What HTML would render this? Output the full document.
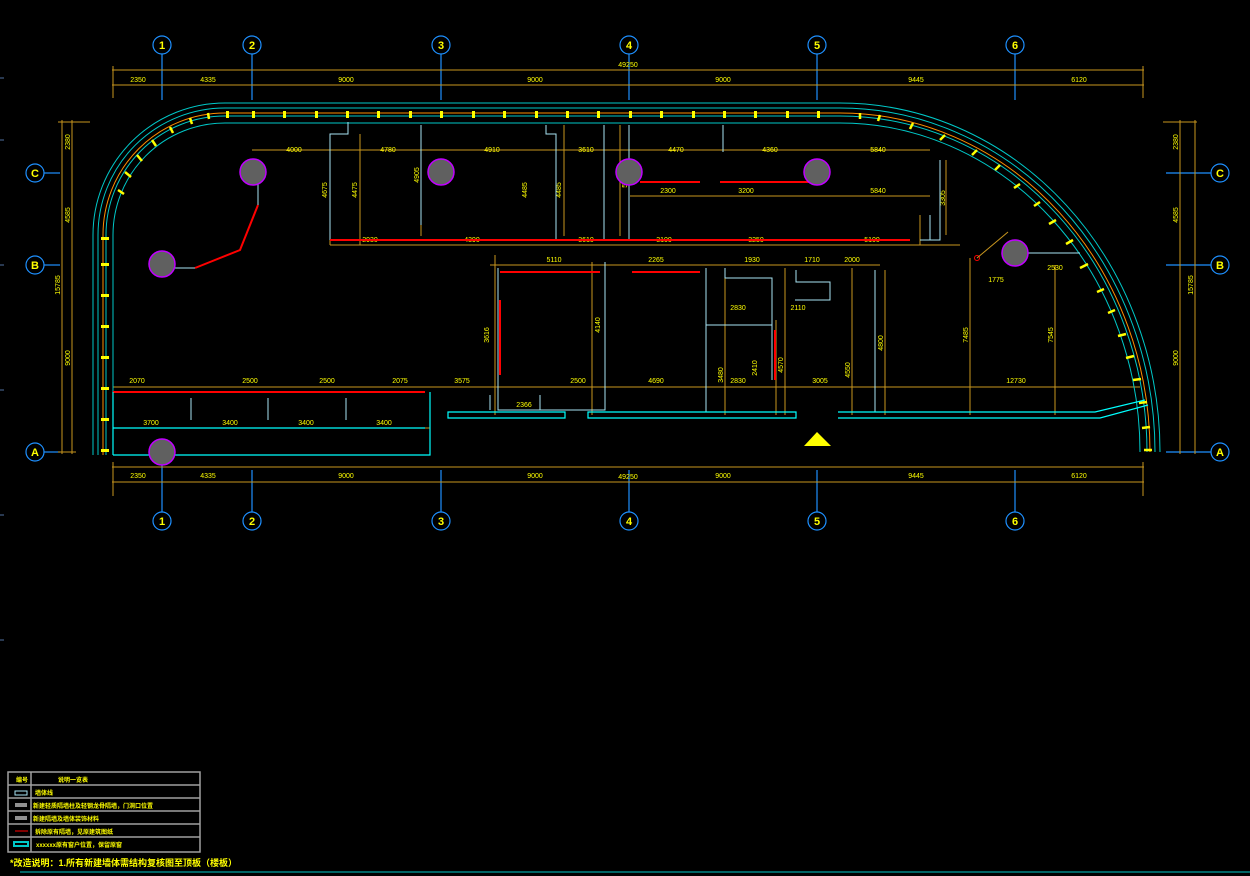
<!DOCTYPE html>
<html><head><meta charset="utf-8"><style>
html,body{margin:0;padding:0;background:#000;width:1250px;height:876px;overflow:hidden}
svg{display:block}
text{font-family:"Liberation Sans","Noto Sans CJK SC",sans-serif;fill:#ffff00}
.d{stroke:#c8961e;stroke-width:1;fill:none}
.w{stroke:#a8e4f4;stroke-width:1;fill:none}
.c{stroke:#00c8c8;stroke-width:1;fill:none}
.cy{stroke:#00ffff;stroke-width:1.2;fill:none}
.r{stroke:#ff0000;stroke-width:2;fill:none}
.ax{stroke:#1e90ff;stroke-width:1.2;fill:none}
.col{fill:#606060;stroke:#c000ff;stroke-width:1.5}
.t{font-size:7px}
.tb{font-size:11px;font-weight:bold}
</style></head><body>
<svg width="1250" height="876" viewBox="0 0 1250 876" xmlns="http://www.w3.org/2000/svg">
<!-- axis lines -->
<g class="ax">
<line x1="162" y1="54" x2="162" y2="100"/><line x1="252" y1="54" x2="252" y2="100"/>
<line x1="441" y1="54" x2="441" y2="100"/><line x1="629" y1="54" x2="629" y2="100"/>
<line x1="817" y1="54" x2="817" y2="100"/><line x1="1015" y1="54" x2="1015" y2="100"/>
<line x1="162" y1="462" x2="162" y2="512"/><line x1="252" y1="470" x2="252" y2="512"/>
<line x1="441" y1="470" x2="441" y2="512"/><line x1="629" y1="470" x2="629" y2="512"/>
<line x1="817" y1="470" x2="817" y2="512"/><line x1="1015" y1="470" x2="1015" y2="512"/>
<line x1="44" y1="173" x2="60" y2="173"/><line x1="44" y1="265" x2="60" y2="265"/><line x1="44" y1="452" x2="60" y2="452"/>
<line x1="1166" y1="173" x2="1211" y2="173"/><line x1="1166" y1="265" x2="1211" y2="265"/><line x1="1166" y1="452" x2="1211" y2="452"/>
</g>
<g class="ax" stroke-width="1.5">
<circle cx="162" cy="45" r="9"/><circle cx="252" cy="45" r="9"/><circle cx="441" cy="45" r="9"/><circle cx="629" cy="45" r="9"/><circle cx="817" cy="45" r="9"/><circle cx="1015" cy="45" r="9"/>
<circle cx="162" cy="521" r="9"/><circle cx="252" cy="521" r="9"/><circle cx="441" cy="521" r="9"/><circle cx="629" cy="521" r="9"/><circle cx="817" cy="521" r="9"/><circle cx="1015" cy="521" r="9"/>
<circle cx="35" cy="173" r="9"/><circle cx="35" cy="265" r="9"/><circle cx="35" cy="452" r="9"/>
<circle cx="1220" cy="173" r="9"/><circle cx="1220" cy="265" r="9"/><circle cx="1220" cy="452" r="9"/>
</g>
<g class="tb" text-anchor="middle">
<text x="162" y="49">1</text><text x="252" y="49">2</text><text x="441" y="49">3</text><text x="629" y="49">4</text><text x="817" y="49">5</text><text x="1015" y="49">6</text>
<text x="162" y="525">1</text><text x="252" y="525">2</text><text x="441" y="525">3</text><text x="629" y="525">4</text><text x="817" y="525">5</text><text x="1015" y="525">6</text>
<text x="35" y="177">C</text><text x="35" y="269">B</text><text x="35" y="456">A</text>
<text x="1220" y="177">C</text><text x="1220" y="269">B</text><text x="1220" y="456">A</text>
</g>
<!-- dimension lines -->
<g class="d">
<line x1="112" y1="70" x2="1144" y2="70"/><line x1="112" y1="85" x2="1144" y2="85"/>
<line x1="113" y1="66" x2="113" y2="98"/><line x1="1143" y1="66" x2="1143" y2="98"/>
<line x1="112" y1="467" x2="1144" y2="467"/><line x1="112" y1="482" x2="1144" y2="482"/>
<line x1="113" y1="462" x2="113" y2="496"/><line x1="1143" y1="462" x2="1143" y2="496"/>
<line x1="62" y1="120" x2="62" y2="454"/><line x1="72" y1="120" x2="72" y2="454"/>
<line x1="58" y1="122" x2="90" y2="122"/><line x1="58" y1="452" x2="76" y2="452"/>
<line x1="1180" y1="120" x2="1180" y2="454"/><line x1="1195" y1="120" x2="1195" y2="454"/>
<line x1="1163" y1="122" x2="1197" y2="122"/>
<!-- interior dims -->
<line x1="252" y1="150" x2="930" y2="150"/>
<line x1="330" y1="245" x2="960" y2="245"/>
<line x1="490" y1="265" x2="880" y2="265"/>
<line x1="113" y1="387" x2="440" y2="387"/>
<line x1="440" y1="387" x2="1140" y2="387"/>
<line x1="113" y1="428" x2="430" y2="428"/>
<line x1="630" y1="196" x2="930" y2="196"/>
<line x1="330" y1="134" x2="330" y2="245"/><line x1="360" y1="134" x2="360" y2="245"/>
<line x1="421" y1="125" x2="421" y2="236"/><line x1="564" y1="125" x2="564" y2="236"/>
<line x1="620" y1="125" x2="620" y2="236"/><line x1="725" y1="270" x2="725" y2="415"/>
<line x1="776" y1="320" x2="776" y2="415"/><line x1="785" y1="268" x2="785" y2="415"/>
<line x1="852" y1="268" x2="852" y2="415"/><line x1="970" y1="258" x2="970" y2="415"/>
<line x1="1055" y1="265" x2="1055" y2="415"/><line x1="592" y1="262" x2="592" y2="415"/>
<line x1="885" y1="270" x2="885" y2="415"/><line x1="495" y1="255" x2="495" y2="415"/>
<line x1="946" y1="160" x2="946" y2="235"/><line x1="920" y1="215" x2="920" y2="245"/>
</g>
<g class="t" text-anchor="middle">
<text x="628" y="67">49250</text><text x="628" y="479">49250</text>
<text x="138" y="82">2350</text><text x="208" y="82">4335</text><text x="346" y="82">9000</text><text x="535" y="82">9000</text><text x="723" y="82">9000</text><text x="916" y="82">9445</text><text x="1079" y="82">6120</text>
<text x="138" y="478">2350</text><text x="208" y="478">4335</text><text x="346" y="478">9000</text><text x="535" y="478">9000</text><text x="723" y="478">9000</text><text x="916" y="478">9445</text><text x="1079" y="478">6120</text>
<text x="294" y="152">4000</text><text x="388" y="152">4780</text><text x="492" y="152">4910</text><text x="586" y="152">3610</text><text x="676" y="152">4470</text><text x="770" y="152">4360</text><text x="878" y="152">5840</text>
<text x="668" y="193">2300</text><text x="746" y="193">3200</text><text x="878" y="193">5840</text>
<text x="370" y="242">2930</text><text x="472" y="242">4390</text><text x="586" y="242">3610</text><text x="664" y="242">3100</text><text x="756" y="242">3250</text><text x="872" y="242">5100</text>
<text x="554" y="262">5110</text><text x="656" y="262">2265</text><text x="752" y="262">1930</text><text x="812" y="262">1710</text><text x="852" y="262">2000</text>
<text x="738" y="310">2830</text><text x="798" y="310">2110</text>
<text x="137" y="383">2070</text><text x="250" y="383">2500</text><text x="327" y="383">2500</text><text x="400" y="383">2075</text><text x="462" y="383">3575</text><text x="578" y="383">2500</text><text x="656" y="383">4690</text><text x="738" y="383">2830</text><text x="820" y="383">3005</text><text x="1016" y="383">12730</text>
<text x="151" y="425">3700</text><text x="230" y="425">3400</text><text x="306" y="425">3400</text><text x="384" y="425">3400</text>
<text x="524" y="407">2366</text><text x="1055" y="270">2530</text><text x="996" y="282">1775</text>
</g>
<g class="t" text-anchor="middle">
<text transform="translate(70,142) rotate(-90)">2380</text><text transform="translate(70,215) rotate(-90)">4585</text><text transform="translate(70,358) rotate(-90)">9000</text><text transform="translate(60,285) rotate(-90)">15785</text>
<text transform="translate(1178,142) rotate(-90)">2380</text><text transform="translate(1178,215) rotate(-90)">4585</text><text transform="translate(1178,358) rotate(-90)">9000</text><text transform="translate(1193,285) rotate(-90)">15785</text>
<text transform="translate(327,190) rotate(-90)">4675</text><text transform="translate(357,190) rotate(-90)">4475</text><text transform="translate(419,175) rotate(-90)">4905</text><text transform="translate(527,190) rotate(-90)">4485</text><text transform="translate(561,190) rotate(-90)">4485</text><text transform="translate(627,180) rotate(-90)">5290</text>
<text transform="translate(489,335) rotate(-90)">3616</text><text transform="translate(600,325) rotate(-90)">4140</text><text transform="translate(723,375) rotate(-90)">3480</text><text transform="translate(757,368) rotate(-90)">2410</text><text transform="translate(783,365) rotate(-90)">4570</text><text transform="translate(850,370) rotate(-90)">4550</text><text transform="translate(883,343) rotate(-90)">4800</text><text transform="translate(968,335) rotate(-90)">7485</text><text transform="translate(1053,335) rotate(-90)">7545</text><text transform="translate(945,198) rotate(-90)">3305</text>
</g>
<!-- outer wall left arc -->
<g>
<path class="c" d="M93 455 V235 A132 132 0 0 1 225 103 H840 A320 349 0 0 1 1160 452"/>
<path class="c" d="M98 455 V235 A127 127 0 0 1 225 108 H840 A315 344 0 0 1 1155 452"/>
<path stroke="#ff8c00" stroke-width="1" fill="none" d="M103 455 V235 A122 122 0 0 1 225 113 H840 A310 339 0 0 1 1150 452"/>
<path class="c" d="M106 455 V235 A119 119 0 0 1 225 116 H840 A307 336 0 0 1 1147 452"/>
<path class="c" d="M113 455 V235 A112 112 0 0 1 225 123 H840 A300 329 0 0 1 1140 452"/>
</g>
<g fill="#ffff00">
<rect x="226" y="111" width="3" height="7"/><rect x="252" y="111" width="3" height="7"/><rect x="283" y="111" width="3" height="7"/><rect x="315" y="111" width="3" height="7"/><rect x="346" y="111" width="3" height="7"/><rect x="377" y="111" width="3" height="7"/><rect x="409" y="111" width="3" height="7"/><rect x="440" y="111" width="3" height="7"/><rect x="472" y="111" width="3" height="7"/><rect x="503" y="111" width="3" height="7"/><rect x="535" y="111" width="3" height="7"/><rect x="566" y="111" width="3" height="7"/><rect x="597" y="111" width="3" height="7"/><rect x="629" y="111" width="3" height="7"/><rect x="660" y="111" width="3" height="7"/><rect x="692" y="111" width="3" height="7"/><rect x="723" y="111" width="3" height="7"/><rect x="754" y="111" width="3" height="7"/><rect x="786" y="111" width="3" height="7"/><rect x="817" y="111" width="3" height="7"/>
<rect x="101" y="263" width="8" height="3"/><rect x="101" y="294" width="8" height="3"/><rect x="101" y="325" width="8" height="3"/><rect x="101" y="356" width="8" height="3"/><rect x="101" y="387" width="8" height="3"/><rect x="101" y="418" width="8" height="3"/><rect x="101" y="449" width="8" height="3"/><rect x="101" y="237" width="8" height="3"/>
</g>
<g stroke="#ffff00" stroke-width="2.5">
<line x1="118" y1="190" x2="124" y2="194"/><line x1="125" y1="172" x2="131" y2="177"/><line x1="137" y1="155" x2="142" y2="161"/><line x1="152" y1="140" x2="156" y2="146"/><line x1="170" y1="127" x2="173" y2="133"/><line x1="190" y1="118" x2="192" y2="124"/><line x1="208" y1="113" x2="209" y2="119"/>
<line x1="860" y1="113" x2="860" y2="119"/><line x1="880" y1="115" x2="878" y2="121"/><line x1="913" y1="123" x2="910" y2="129"/><line x1="945" y1="135" x2="940" y2="140"/><line x1="977" y1="150" x2="972" y2="155"/><line x1="1000" y1="165" x2="995" y2="170"/><line x1="1020" y1="184" x2="1014" y2="188"/><line x1="1040" y1="202" x2="1034" y2="206"/><line x1="1056" y1="220" x2="1049" y2="224"/><line x1="1073" y1="240" x2="1066" y2="244"/><line x1="1088" y1="264" x2="1080" y2="268"/><line x1="1104" y1="289" x2="1097" y2="292"/><line x1="1115" y1="310" x2="1108" y2="313"/><line x1="1126" y1="334" x2="1118" y2="336"/><line x1="1134" y1="356" x2="1126" y2="358"/><line x1="1141" y1="379" x2="1133" y2="380"/><line x1="1147" y1="402" x2="1139" y2="403"/><line x1="1150" y1="427" x2="1142" y2="428"/><line x1="1152" y1="450" x2="1144" y2="450"/>
</g>
<!-- interior walls -->
<g class="w" stroke-width="2.5" stroke="#a8e4f4">
<path d="M348 122 V134 H330 V240"/><path d="M421 125 V225"/><path d="M546 125 V134 H556 V240"/><path d="M604 125 V240"/>
<path d="M629 125 V240"/><path d="M723 125 V152"/><path d="M940 160 V240 H920"/><path d="M930 215 V240"/>
<path d="M498 268 V410 H605 V262"/><path d="M706 268 V412"/><path d="M725 268 V278 H772 V325 H706"/><path d="M772 325 V380"/>
<path d="M796 270 V282 H830 V300 H795"/><path d="M875 270 V412"/><path d="M258 180 V205"/><path d="M175 268 H195"/>
<path d="M191 398 V420"/><path d="M268 398 V420"/><path d="M346 398 V420"/><path d="M490 395 V410"/><path d="M540 395 V410"/><path d="M1028 253 H1080"/>
</g>
<g class="r">
<path d="M330 240 H910"/><path d="M258 205 L240 250 L195 268"/><path d="M500 272 H600"/><path d="M500 300 V375"/>
<path d="M632 272 H700"/><path d="M640 182 H700"/><path d="M720 182 H810"/><path d="M113 392 H425"/><path d="M775 330 V380"/>
</g>
<g class="cy">
<path d="M113 392 V455 M113 455 H430 V392"/><path d="M448 412 H565 V418 H448 Z"/><path d="M588 412 H796 V418 H588 Z"/>
<path d="M838 412 H1095 L1145 400 M838 418 H1100 L1148 405"/><path d="M113 428 H425"/>
</g>
<!-- columns -->
<g class="col">
<circle cx="253" cy="172" r="13"/><circle cx="441" cy="172" r="13"/><circle cx="629" cy="172" r="13"/><circle cx="817" cy="172" r="13"/>
<circle cx="162" cy="264" r="13"/><circle cx="1015" cy="253" r="13"/><circle cx="162" cy="452" r="13"/>
</g>
<polygon points="804,446 817,432 831,446" fill="#ffff00"/>
<circle cx="977" cy="258" r="2.5" fill="none" stroke="#ff0000"/>
<line x1="977" y1="258" x2="1008" y2="232" class="d"/>
<!-- left edge marks -->
<g stroke="#5070a0"><line x1="0" y1="78" x2="4" y2="78"/><line x1="0" y1="140" x2="4" y2="140"/><line x1="0" y1="265" x2="4" y2="265"/><line x1="0" y1="390" x2="4" y2="390"/><line x1="0" y1="515" x2="4" y2="515"/><line x1="0" y1="640" x2="4" y2="640"/></g>
<!-- legend -->
<g stroke="#a0a0a0" stroke-width="1.5" fill="none">
<rect x="8" y="772" width="192" height="80"/>
<line x1="31" y1="772" x2="31" y2="852"/>
<line x1="8" y1="785" x2="200" y2="785"/><line x1="8" y1="798" x2="200" y2="798"/><line x1="8" y1="811" x2="200" y2="811"/><line x1="8" y1="824" x2="200" y2="824"/><line x1="8" y1="837" x2="200" y2="837"/>
</g>
<rect x="15" y="791" width="12" height="4" fill="none" stroke="#a8e4f4"/>
<rect x="15" y="803" width="12" height="4" fill="#909090"/><rect x="15" y="816" width="12" height="4" fill="#909090"/>
<line x1="15" y1="831" x2="28" y2="831" stroke="#ff0000"/>
<rect x="14" y="842" width="14" height="4" fill="none" stroke="#00c8c8" stroke-width="2"/>
<g font-size="6" font-weight="bold">
<text x="16" y="782">编号</text><text x="58" y="782">说明一览表</text>
<text x="35" y="795">墙体线</text><text x="33" y="808">新建轻质隔墙柱及轻钢龙骨隔墙，门洞口位置</text>
<text x="33" y="821">新建隔墙及墙体装饰材料</text><text x="35" y="834">拆除原有隔墙，见原建筑图纸</text><text x="36" y="847">xxxxxx原有窗户位置，保留原窗</text>
</g>
<text x="10" y="866" font-size="9" font-weight="bold">*改造说明：1.所有新建墙体需结构复核图至顶板（楼板）</text>
<line x1="20" y1="872" x2="1250" y2="872" stroke="#00c8c8"/>
</svg>
</body></html>
